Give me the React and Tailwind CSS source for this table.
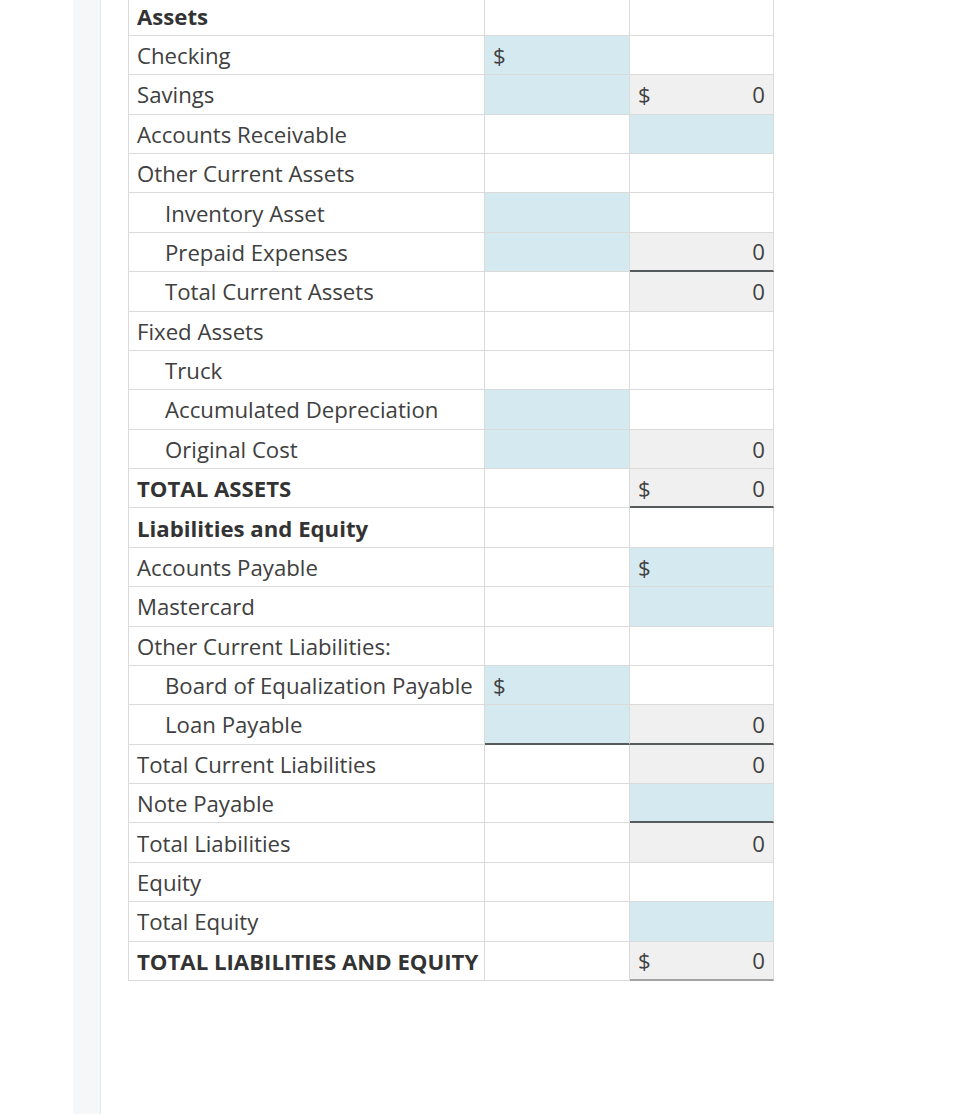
import React from 'react';

const BLUE = 'bg-[#d5e9f0]';
const GRAY = 'bg-[#f0f0f0]';

// c2 / c3: { bg, dollar, value, thick }
const rows = [
  { label: 'Assets', bold: true },
  { label: 'Checking', c2: { bg: BLUE, dollar: true } },
  { label: 'Savings', c2: { bg: BLUE }, c3: { bg: GRAY, dollar: true, value: '0' } },
  { label: 'Accounts Receivable', c3: { bg: BLUE } },
  { label: 'Other Current Assets' },
  { label: 'Inventory Asset', indent: true, c2: { bg: BLUE } },
  { label: 'Prepaid Expenses', indent: true, c2: { bg: BLUE }, c3: { bg: GRAY, value: '0', thick: 'dark' } },
  { label: 'Total Current Assets', indent: true, c3: { bg: GRAY, value: '0' } },
  { label: 'Fixed Assets' },
  { label: 'Truck', indent: true },
  { label: 'Accumulated Depreciation', indent: true, c2: { bg: BLUE } },
  { label: 'Original Cost', indent: true, c2: { bg: BLUE }, c3: { bg: GRAY, value: '0' } },
  { label: 'TOTAL ASSETS', bold: true, c3: { bg: GRAY, dollar: true, value: '0', thick: 'dark' } },
  { label: 'Liabilities and Equity', bold: true },
  { label: 'Accounts Payable', c3: { bg: BLUE, dollar: true } },
  { label: 'Mastercard', c3: { bg: BLUE } },
  { label: 'Other Current Liabilities:' },
  { label: 'Board of Equalization Payable', indent: true, c2: { bg: BLUE, dollar: true } },
  { label: 'Loan Payable', indent: true, c2: { bg: BLUE, thick: 'dark' }, c3: { bg: GRAY, value: '0', thick: 'dark' } },
  { label: 'Total Current Liabilities', c3: { bg: GRAY, value: '0' } },
  { label: 'Note Payable', c3: { bg: BLUE, thick: 'dark' } },
  { label: 'Total Liabilities', c3: { bg: GRAY, value: '0' } },
  { label: 'Equity' },
  { label: 'Total Equity', c3: { bg: BLUE } },
  { label: 'TOTAL LIABILITIES AND EQUITY', bold: true, c3: { bg: GRAY, dollar: true, value: '0', thick: 'light' } },
];

const Cell = ({ cell = {} }) => {
  const border =
    cell.thick === 'dark'
      ? 'border-b-2 border-b-[#555a5c]'
      : cell.thick === 'light'
      ? 'border-b-2 border-b-[#a3a3a3]'
      : 'border-b border-b-[#dadada]';
  return (
    <div
      className={`flex items-center justify-between px-2 pt-[2px] border-r border-r-[#dadada] ${border} ${cell.bg || 'bg-white'}`}
    >
      <span>{cell.dollar ? '$' : ''}</span>
      <span>{cell.value || ''}</span>
    </div>
  );
};

export default function App() {
  return (
    <div className="flex h-[1114px] w-[970px] bg-white overflow-hidden" style={{ fontFamily: '"Open Sans", "Liberation Sans", sans-serif' }}>
      <div className="w-[73px] shrink-0" />
      <div className="w-[28px] shrink-0 bg-[#f6f7f9] border-r border-r-[#e6e8eb]" />
      <div className="pl-[27px]">
        <div className="mt-[-4.4px] w-[646px] border-l border-t border-[#dadada] text-[22.2px] leading-none text-[#404040]">
          {rows.map((r, i) => (
            <div key={i} className="grid grid-cols-[356px_145px_144px] h-[39.375px]">
              <div
                className={`flex items-center pt-[2px] border-r border-b border-[#dadada] bg-white whitespace-nowrap ${
                  r.indent ? 'pl-[36px]' : 'pl-2'
                } ${r.bold ? 'font-bold text-[#333]' : ''}`}
              >
                {r.label}
              </div>
              <Cell cell={r.c2} />
              <Cell cell={r.c3} />
            </div>
          ))}
        </div>
      </div>
    </div>
  );
}
